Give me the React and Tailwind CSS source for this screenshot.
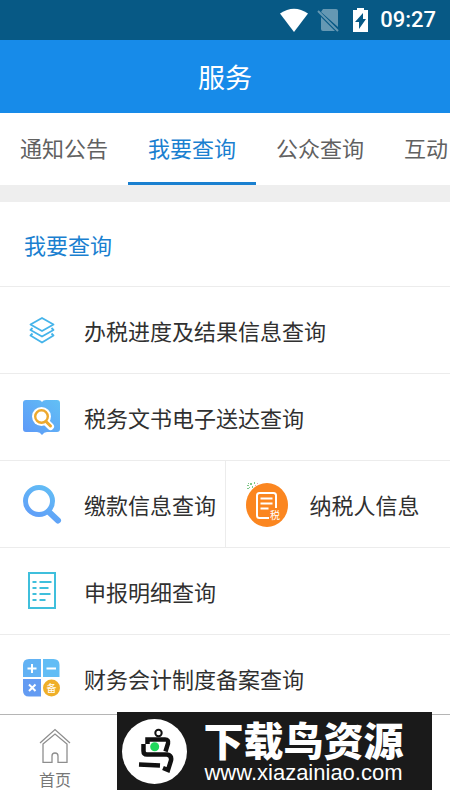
import React from 'react';

const LayersIcon = () => (
  <svg viewBox="0 0 42 42" className="h-[42px] w-[42px]" fill="none" stroke="#45b4ea" strokeWidth="1.8" strokeLinejoin="round" aria-hidden="true">
    <path d="M22 9 33.500 15.500 22 22 10.500 15.500Z" />
    <path d="M12.500 19 10.500 21 22 27.500 33.500 21 31.500 19" />
    <path d="M12.500 24.500 10.500 26.500 22 33.500 33.500 26.500 31.500 24.500" />
  </svg>
);

const BookSearchIcon = () => (
  <svg viewBox="0 0 42 42" className="h-[42px] w-[42px]" aria-hidden="true">
    <defs>
      <linearGradient id="book" x1="1" y1="0" x2="0" y2="1">
        <stop offset="0" stopColor="#62c0f5" />
        <stop offset="1" stopColor="#5d98f8" />
      </linearGradient>
    </defs>
    <path d="M6 4h12q3 0 4 2 1-2 4-2h11q3 0 3 3v26q0 3-3 3H27q-3 0-5 3-2-3-5-3H6q-3 0-3-3V7q0-3 3-3Z" fill="url(#book)" />
    <circle cx="21.500" cy="20.500" r="9.500" fill="#fff" />
    <path d="M26 26l4.500 4.500" stroke="#fff" strokeWidth="7" strokeLinecap="round" />
    <circle cx="21.500" cy="20.500" r="6.300" fill="#fff" stroke="#eda92f" strokeWidth="2.400" />
    <path d="M26 25.500l4.500 4.500" stroke="#eda92f" strokeWidth="3" strokeLinecap="round" />
  </svg>
);

const SearchIcon = () => (
  <svg viewBox="0 0 42 42" className="h-[42px] w-[42px]" fill="none" stroke="url(#lens)" strokeLinecap="round" aria-hidden="true">
    <defs>
      <linearGradient id="lens" gradientUnits="userSpaceOnUse" x1="30" y1="4" x2="14" y2="36">
        <stop offset="0" stopColor="#62bdf5" />
        <stop offset="1" stopColor="#609df8" />
      </linearGradient>
    </defs>
    <circle cx="19" cy="18" r="13.500" strokeWidth="5" />
    <path d="M29 29 38 37.500" strokeWidth="6" />
  </svg>
);

const TaxpayerIcon = () => (
  <svg viewBox="0 0 42 46" className="h-[46px] w-[42px]" fill="none" aria-hidden="true">
    <g fill="#7fc788">
      <path d="M1 4h2v1H1zM4 2h2v2H4zM1 7h2v1H1zM3 6h1v1H3zM6 5h1v2H6zM8 1h1v2H8zM2 2h1v1H2z" />
      <path d="M11 2h1v1h-1zM9 4h1v1H9z" fill="#e7a0b5" />
    </g>
    <ellipse cx="21" cy="24" rx="21" ry="22" fill="#fb8620" />
    <path d="M23 37H13.500q-2.500 0-2.500-2.500V14.500Q11 12 13.500 12h14q2.500 0 2.500 2.500V27" stroke="#fff" strokeWidth="2" />
    <path d="M14.500 17.500h12M14.500 22.500h12M14.500 27.500h8" stroke="#fff" strokeWidth="2" />
    <text x="24" y="38" fill="#fff" fontSize="10" fontFamily="'Noto Sans CJK SC', sans-serif">税</text>
  </svg>
);

const ListIcon = () => (
  <svg viewBox="0 0 42 42" className="h-[42px] w-[42px]" fill="none" stroke="#3fbfdc" strokeWidth="2" aria-hidden="true">
    <rect x="9" y="3" width="26" height="35" />
    <path d="M12.500 12h4M12.500 18h4M12.500 24h4M12.500 30h4M19.500 12h12M19.500 18h9M19.500 24h11M19.500 30h6" />
  </svg>
);

const CalculatorIcon = () => (
  <svg viewBox="0 0 42 42" className="h-[42px] w-[42px]" fill="none" aria-hidden="true">
    <path d="M21 2v18H3V8q0-6 6-6Z" fill="#62b2f4" />
    <path d="M23 2h10.500q6 0 6 6v12H23Z" fill="#62bdf5" />
    <path d="M3 22h18v17.500H9q-6 0-6-6Z" fill="#639bf2" />
    <circle cx="31.500" cy="31" r="8.500" fill="#efaf28" />
    <path d="M12 7v9M7.500 11.500h9M26.500 11.500H36M9 27.500l6.500 6.500M15.500 27.500 9 34" stroke="#fff" strokeWidth="2" />
    <text x="31.500" y="34.500" fill="#fff" fontSize="10" textAnchor="middle" fontFamily="'Noto Sans CJK SC', sans-serif">备</text>
  </svg>
);

const HomeIcon = () => (
  <svg viewBox="0 0 34 36" className="h-9 w-[34px]" fill="none" stroke="#8e8e8e" strokeWidth="1.300" aria-hidden="true">
    <path d="M2 16 17 2.500 32 16" />
    <path d="M5 17 17 7l12 10V35.300h-9V29q0-3-3-3t-3 3v6.300H5Z" />
  </svg>
);

const BirdLogo = () => (
  <svg viewBox="0 0 66 66" className="h-[66px] w-[66px] shrink-0" fill="none" stroke="#111" strokeWidth="4.500" aria-hidden="true">
    <circle cx="33.500" cy="33.500" r="32.500" fill="#fff" stroke="none" />
    <circle cx="37.500" cy="15" r="3.200" strokeWidth="2" />
    <path d="M26.500 26v-4.500H44q4 0 3 4l-2.500 8" />
    <path d="M22.500 26v7q0 3.500 3.500 3.500h20q5 1 4 6l-3 9.500-5-2M18 46.500l21 1" />
    <circle cx="33.700" cy="28.700" r="4.500" fill="#20d85c" stroke="none" />
  </svg>
);

const StatusBar = () => (
  <div className="flex h-10 shrink-0 items-center justify-end bg-[#075985] pr-[14px] text-white">
    <svg viewBox="0 0 92 28" className="h-7 w-[92px]" aria-hidden="true">
      <path d="M0 7.500Q14-2 28 7.500L14 26Z" fill="#fff" />
      <g opacity=".38">
        <path d="M43 3h13q2 0 2 2v16L41 6ZM41 11l14 14H43q-2 0-2-2Z" fill="#fff" />
        <path d="m38 5 20 20" stroke="#fff" strokeWidth="2" />
      </g>
      <path d="M77 2h7v2h4v22H73V4h4Z" fill="#fff" />
      <path d="M83 7v6h3l-7 10v-7h-4Z" fill="#075985" />
    </svg>
    <span className="ml-2 font-['Roboto',sans-serif] text-[22px] leading-7 font-medium">09:27</span>
  </div>
);

const tabs = ['通知公告', '我要查询', '公众查询', '互动'];

const rows = [
  [{ label: '办税进度及结果信息查询', icon: LayersIcon }],
  [{ label: '税务文书电子送达查询', icon: BookSearchIcon }],
  [
    { label: '缴款信息查询', icon: SearchIcon },
    { label: '纳税人信息', icon: TaxpayerIcon },
  ],
  [{ label: '申报明细查询', icon: ListIcon }],
  [{ label: '财务会计制度备案查询', icon: CalculatorIcon }],
];

const App = () => {
  const [active, setActive] = React.useState('我要查询');

  return (
    <div className="relative flex h-screen flex-col overflow-hidden bg-white font-['Noto_Sans_CJK_SC',sans-serif] text-[22px] text-[#303030]">
      <StatusBar />
      <header className="flex h-[73px] shrink-0 items-center justify-center bg-[#178be9]">
        <h1 className="text-[27px] leading-8 text-white">服务</h1>
      </header>

      {/* Tabs */}
      <nav className="flex h-[72px] shrink-0 overflow-hidden">
        {tabs.map((tab) => (
          <button
            key={tab}
            type="button"
            onClick={() => setActive(tab)}
            className={`shrink-0 border-b-3 px-5 ${
              tab === active ? 'border-[#1a80d0] text-[#1a80d0]' : 'border-transparent text-[#616161]'
            }`}
          >
            {tab}
          </button>
        ))}
      </nav>

      {/* Services */}
      <main className="min-h-0 flex-1 overflow-hidden border-t-[17px] border-[#eee]">
        <h2 className="flex h-[85px] items-center border-b border-[#ececec] px-6 text-[#1a80d0]">我要查询</h2>
        {rows.map((row) => (
          <div key={row[0].label} className="flex h-[87px] border-b border-[#ececec]">
            {row.map(({ label, icon: Icon }) => (
              <button
                key={label}
                type="button"
                className="flex flex-1 items-center border-l border-[#ececec] pl-5 text-left whitespace-nowrap first:border-l-0"
              >
                <Icon />
                <span className="ml-[22px]">{label}</span>
              </button>
            ))}
          </div>
        ))}
      </main>

      {/* Bottom navigation */}
      <footer className="flex h-[86px] shrink-0 border-t border-[#b5b5b5] bg-white">
        <a href="#home" className="flex w-[110px] flex-col items-center pt-3 text-base leading-6 text-[#777]">
          <HomeIcon />
          <span className="mt-1">首页</span>
        </a>
      </footer>

      {/* Site badge */}
      <div className="absolute right-[18px] bottom-[10px] flex h-[78px] w-[315px] items-center bg-[#1a1a1a] pl-1 text-white">
        <BirdLogo />
        <div className="flex flex-1 flex-col items-center gap-1 pt-1 pr-3">
          <span className="text-[40px] leading-9 font-black">下载鸟资源</span>
          <span className="font-['Liberation_Sans',sans-serif] text-[22px] leading-6">www.xiazainiao.com</span>
        </div>
      </div>
    </div>
  );
};

export default App;
